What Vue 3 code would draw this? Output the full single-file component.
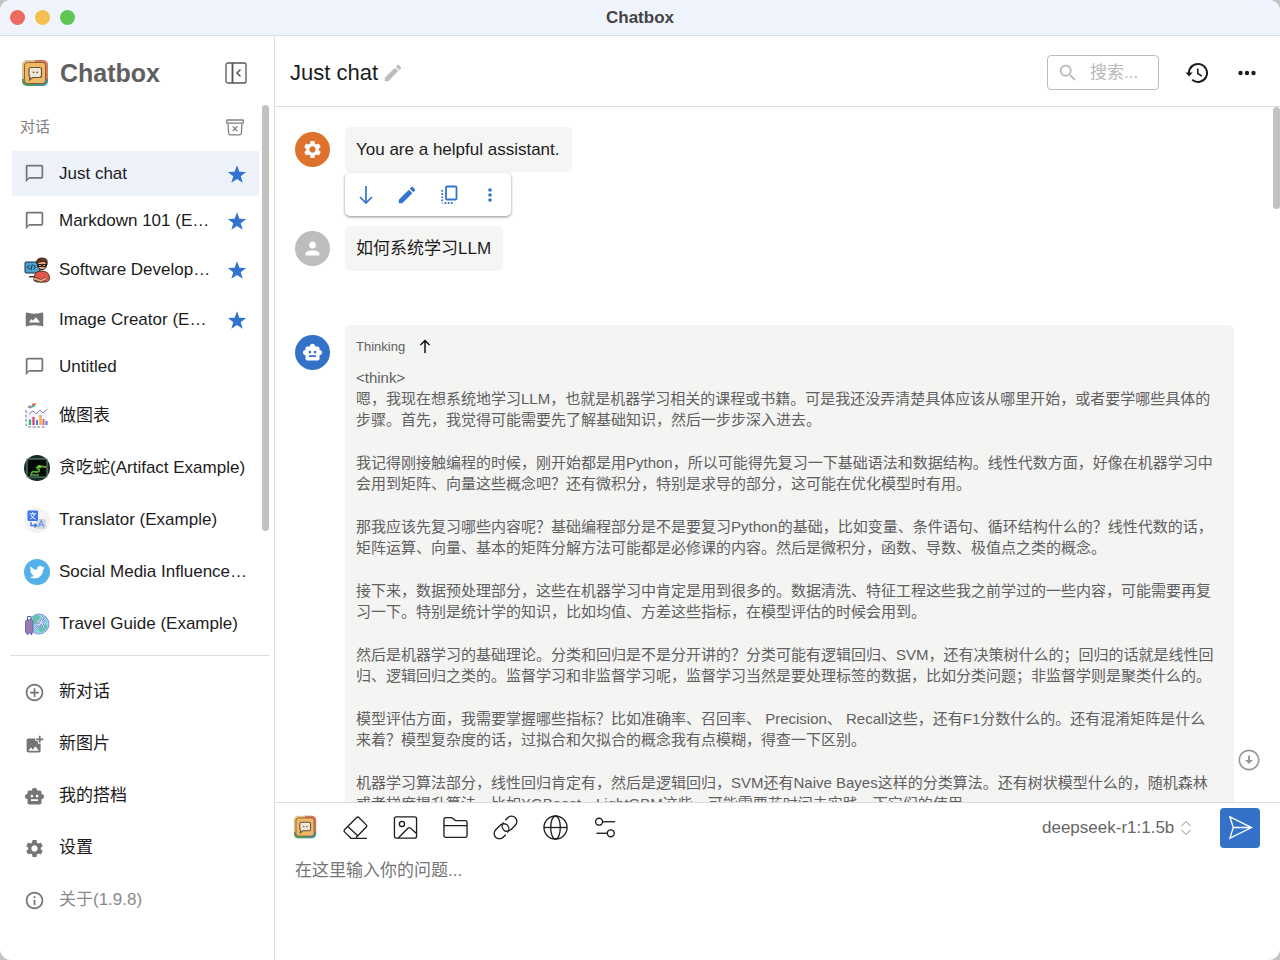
<script setup>
import { ref } from 'vue'

const P = {
  chat: 'M20 2H4c-1.1 0-2 .9-2 2v18l4-4h14c1.1 0 2-.9 2-2V4c0-1.1-.9-2-2-2zm0 14H6l-2 2V4h16v12z',
  star: 'M12 18 18.8 22.4 16.5 14.8 23 9.6 14.9 9.3 12 1.6 9.1 9.3 1 9.6 7.5 14.8 5.2 22.4z',
  pano: 'M20.73 4.09c-.24.08-3.34 1.23-8.73 1.23-5.43 0-8.48-1.14-8.73-1.23C2.64 3.84 2 4.27 2 5v14c0 .73.64 1.16 1.27.91.24-.09 3.34-1.23 8.73-1.23 5.43 0 8.48 1.14 8.73 1.23.63.25 1.27-.18 1.27-.91V5c0-.73-.64-1.16-1.27-.91zM5.5 15.3l3-4 1.8 2.2 3.2-4.2 5 6z',
  add: 'M13 7h-2v4H7v2h4v4h2v-4h4v-2h-4V7zm-1-5C6.48 2 2 6.48 2 12s4.48 10 10 10 10-4.48 10-10S17.52 2 12 2zm0 18c-4.41 0-8-3.59-8-8s3.59-8 8-8 8 3.59 8 8-3.59 8-8 8z',
  photo: 'M19 7v2.99s-1.99.01-2 0V7h-3s.01-1.99 0-2h3V2h2v3h3v2h-3zm-3 4V8h-3V5H5c-1.1 0-2 .9-2 2v12c0 1.1.9 2 2 2h12c1.1 0 2-.9 2-2v-8h-3zM5 19l3-4 2 3 3-4 4 5H5z',
  robot: 'M20 9V7c0-1.1-.9-2-2-2h-3c0-1.66-1.34-3-3-3S9 3.34 9 5H6c-1.1 0-2 .9-2 2v2c-1.66 0-3 1.34-3 3s1.34 3 3 3v4c0 1.1.9 2 2 2h12c1.1 0 2-.9 2-2v-4c1.66 0 3-1.34 3-3s-1.34-3-3-3zM7.5 11.5c0-.83.67-1.5 1.5-1.5s1.5.67 1.5 1.5S9.83 13 9 13s-1.5-.67-1.5-1.5zM16 17H8v-2h8v2zm-1-4c-.83 0-1.5-.67-1.5-1.5S14.17 10 15 10s1.5.67 1.5 1.5S15.83 13 15 13z',
  gear: 'M19.14 12.94c.04-.3.06-.61.06-.94 0-.32-.02-.64-.07-.94l2.03-1.58c.18-.14.23-.41.12-.61l-1.92-3.32c-.12-.22-.37-.29-.59-.22l-2.39.96c-.5-.38-1.03-.7-1.62-.94l-.36-2.54c-.04-.24-.24-.41-.48-.41h-3.84c-.24 0-.43.17-.47.41l-.36 2.54c-.59.24-1.13.57-1.62.94l-2.39-.96c-.22-.08-.47 0-.59.22L2.74 8.87c-.12.21-.08.47.12.61l2.03 1.58c-.05.3-.09.63-.09.94s.02.64.07.94l-2.03 1.58c-.18.14-.23.41-.12.61l1.92 3.32c.12.22.37.29.59.22l2.39-.96c.5.38 1.03.7 1.62.94l.36 2.54c.05.24.24.41.48.41h3.84c.24 0 .44-.17.47-.41l.36-2.54c.59-.24 1.13-.56 1.62-.94l2.39.96c.22.08.47 0 .59-.22l1.92-3.32c.12-.22.07-.47-.12-.61l-2.01-1.58zM12 15.6c-1.98 0-3.6-1.62-3.6-3.6s1.62-3.6 3.6-3.6 3.6 1.62 3.6 3.6-1.62 3.6-3.6 3.6z',
  info: 'M11 7h2v2h-2zm0 4h2v6h-2zm1-9C6.48 2 2 6.48 2 12s4.48 10 10 10 10-4.48 10-10S17.52 2 12 2zm0 18c-4.41 0-8-3.59-8-8s3.59-8 8-8 8 3.59 8 8-3.59 8-8 8z',
  edit: 'M3 17.25V21h3.75L17.81 9.94l-3.75-3.75L3 17.25zM20.71 7.04c.39-.39.39-1.02 0-1.41l-2.34-2.34a.996.996 0 0 0-1.41 0l-1.83 1.83 3.75 3.75 1.83-1.83z',
  person: 'M12 12c2.21 0 4-1.79 4-4s-1.79-4-4-4-4 1.79-4 4 1.79 4 4 4zm0 2c-2.67 0-8 1.34-8 4v2h16v-2c0-2.66-5.33-4-8-4z',
  search: 'M15.5 14h-.79l-.28-.27C15.41 12.59 16 11.11 16 9.5 16 5.91 13.09 3 9.5 3S3 5.91 3 9.5 5.91 16 9.5 16c1.61 0 3.09-.59 4.23-1.57l.27.28v.79l5 4.99L20.49 19l-4.99-5zm-6 0C7.01 14 5 11.99 5 9.5S7.01 5 9.5 5 14 7.01 14 9.5 11.99 14 9.5 14z',
}

const sessions = [
  { name: 'Just chat', icon: 'chat', star: true },
  { name: 'Markdown 101 (Example)', icon: 'chat', star: true },
  { name: 'Software Developer (Example)', avatar: 'developer', star: true },
  { name: 'Image Creator (Example)', icon: 'pano', star: true },
  { name: 'Untitled', icon: 'chat' },
  { name: '做图表', avatar: 'chart' },
  { name: '贪吃蛇(Artifact Example)', avatar: 'snake' },
  { name: 'Translator (Example)', avatar: 'translate' },
  { name: 'Social Media Influencer (Example)', avatar: 'bird' },
  { name: 'Travel Guide (Example)', avatar: 'travel' },
]
const active = ref(0)

const menu = [
  { name: '新对话', icon: 'add' },
  { name: '新图片', icon: 'photo' },
  { name: '我的搭档', icon: 'robot' },
  { name: '设置', icon: 'gear' },
  { name: '关于(1.9.8)', icon: 'info', muted: true },
]

const thoughts = [
  ['嗯，我现在想系统地学习LLM，也就是机器学习相关的课程或书籍。可是我还没弄清楚具体应该从哪里开始，或者要学哪些具体的', '步骤。首先，我觉得可能需要先了解基础知识，然后一步步深入进去。'],
  ['我记得刚接触编程的时候，刚开始都是用Python，所以可能得先复习一下基础语法和数据结构。线性代数方面，好像在机器学习中', '会用到矩阵、向量这些概念吧？还有微积分，特别是求导的部分，这可能在优化模型时有用。'],
  ['那我应该先复习哪些内容呢？基础编程部分是不是要复习Python的基础，比如变量、条件语句、循环结构什么的？线性代数的话，', '矩阵运算、向量、基本的矩阵分解方法可能都是必修课的内容。然后是微积分，函数、导数、极值点之类的概念。'],
  ['接下来，数据预处理部分，这些在机器学习中肯定是用到很多的。数据清洗、特征工程这些我之前学过的一些内容，可能需要再复', '习一下。特别是统计学的知识，比如均值、方差这些指标，在模型评估的时候会用到。'],
  ['然后是机器学习的基础理论。分类和回归是不是分开讲的？分类可能有逻辑回归、SVM，还有决策树什么的；回归的话就是线性回', '归、逻辑回归之类的。监督学习和非监督学习呢，监督学习当然是要处理标签的数据，比如分类问题；非监督学则是聚类什么的。'],
  ['模型评估方面，我需要掌握哪些指标？比如准确率、召回率、 Precision、 Recall这些，还有F1分数什么的。还有混淆矩阵是什么', '来着？模型复杂度的话，过拟合和欠拟合的概念我有点模糊，得查一下区别。'],
  ['机器学习算法部分，线性回归肯定有，然后是逻辑回归，SVM还有Naive Bayes这样的分类算法。还有树状模型什么的，随机森林', '或者梯度提升算法，比如XGBoost、LightGBM这些，可能需要花时间去实践，下它们的使用。'],
]

const draft = ref('')
const query = ref('')
const model = ref('deepseek-r1:1.5b')
</script>

<template>
  <div class="window">
    <svg width="0" height="0" class="defs" aria-hidden="true">
      <defs>
        <symbol id="logo" viewBox="0 0 28 28">
          <rect x="1" y="1" width="26" height="26" rx="5" fill="#dfc08a" />
          <path d="M14 1h8a5 5 0 0 1 5 5v14H14z" fill="#d4775a" />
          <path d="M1 20h13v7H6a5 5 0 0 1-5-5z" fill="#4f9c62" />
          <path d="M14 20h13v2a5 5 0 0 1-5 5h-8z" fill="#438f9b" />
          <rect x="3.500" y="3.500" width="21" height="21" rx="3" fill="#efb966" stroke="#8b6039" stroke-width="1" />
          <path d="M10 8.500h8.500a2 2 0 0 1 2 2v6a2 2 0 0 1-2 2H11.500l-3 2.500.4-3.200A2 2 0 0 1 8 16.500v-6a2 2 0 0 1 2-2z" fill="#f3e6d6" stroke="#66513d" stroke-width="1.200" />
          <circle cx="12.600" cy="13.300" r=".9" fill="#66513d" />
          <circle cx="16.200" cy="13.300" r=".9" fill="#66513d" />
        </symbol>
      </defs>
    </svg>

    <header class="titlebar">
      <div class="lights">
        <button class="light red" aria-label="Close"></button>
        <button class="light yellow" aria-label="Minimize"></button>
        <button class="light green" aria-label="Zoom"></button>
      </div>
      <span class="window-title">Chatbox</span>
    </header>

    <div class="body">
      <aside class="sidebar">
        <div class="brand">
          <svg class="brand-logo"><use href="#logo" /></svg>
          <h1>Chatbox</h1>
          <button class="icon-btn" aria-label="Collapse sidebar">
            <svg width="22" height="22" viewBox="0 0 22 22" fill="none" stroke="#555" stroke-width="1.300">
              <rect x="1" y="1" width="20" height="20" rx="2" />
              <path d="M7.500 1v20" stroke-width="1.800" />
              <path d="M15.500 7.500 12 11l3.500 3.500" stroke-width="1.500" />
            </svg>
          </button>
        </div>

        <div class="section">
          <h2>对话</h2>
          <button class="icon-btn" aria-label="Clear conversations">
            <svg width="18" height="17" viewBox="0 0 18 17" fill="none" stroke="#808080" stroke-width="1.300">
              <rect x=".7" y="1" width="16.600" height="3.200" rx=".8" />
              <path d="M2 4.200l.6 9.800a2 2 0 0 0 2 1.800h8.800a2 2 0 0 0 2-1.800L16 4.200" />
              <path d="M6.700 7.400l4.600 4.600M11.300 7.400 6.700 12" />
            </svg>
          </button>
        </div>

        <nav class="sessions">
          <button
            v-for="(s, i) in sessions"
            :key="s.name"
            class="row"
            :class="{ active: i === active, starred: s.star, pictured: s.avatar }"
            @click="active = i"
          >
            <span class="slot">
              <svg v-if="s.icon" class="glyph" viewBox="0 0 24 24"><path :d="P[s.icon]" fill-rule="evenodd" /></svg>
              <svg v-else-if="s.avatar === 'developer'" class="pic" viewBox="0 0 26 26">
                <rect x="1" y="5" width="15" height="11" rx="1" fill="#4ba3d4" stroke="#20303a" />
                <path d="M5.500 8 3.500 10.200l2 2.200M9.500 8l2 2.200-2 2.200M8.300 7.500l-1.500 5.500" stroke="#182a35" fill="none" />
                <path d="M5 19h10v1.500H5z" fill="#444" />
                <circle cx="18" cy="8" r="4.600" fill="#e8a77b" stroke="#2b1a16" />
                <path d="M12.500 7C12 2 15 .8 18.500 1 23 1 24 4 23 8c-1-2-1-3-2-4-2 1-6 1-7.200 1z" fill="#633526" stroke="#2b1a16" stroke-width=".7" />
                <path d="M14.500 7.500h3v2h-3zm4 0h3v2h-3z" fill="none" stroke="#151515" />
                <path d="M10 23c0-6 2-9 7-9s8.500 2 8.500 7c0 2-1 4-4 4H14c-2 0-4-.8-4-2z" fill="#e2574c" stroke="#2b1a16" stroke-width=".8" />
                <path d="M10 21.500l7 2.500 5-2.500" stroke="#2b1a16" stroke-width="3" fill="none" />
                <path d="M10 21.500l7 2.500 5-2.500" stroke="#e8a77b" stroke-width="2" fill="none" />
              </svg>
              <svg v-else-if="s.avatar === 'chart'" class="pic" viewBox="0 0 26 26">
                <rect x="3" y="8" width="20" height="14" fill="#f1f2ff" />
                <path d="M4 4.500l2.500-2M8 1.500l4-.5" stroke="#e65a4b" stroke-width="1.600" />
                <path d="M5.500 5l4-2" stroke="#36a3dc" stroke-width="1.600" />
                <path d="M8.500 3.500l2.500-1" stroke="#49b66c" stroke-width="1.600" />
                <path d="M2 7v15l2 2h18" stroke="#77748f" stroke-dasharray="3 1.500" fill="none" />
                <path d="M5 11l4-3 3 3 4-4 3 3 4.500-4" stroke="#7e7aa5" stroke-width=".9" fill="none" />
                <path d="M16.500 12v10" stroke="#efb13e" stroke-width="2.400" />
                <path d="M9.500 14v8" stroke="#de4c76" stroke-width="2.400" />
                <path d="M13 17v5M22.500 18v4" stroke="#5876e8" stroke-width="2" />
                <path d="M19.500 16v6" stroke="#e65a67" stroke-width="1.800" />
                <path d="M6 16.500v5.500" stroke="#31b36e" stroke-width="2.200" />
              </svg>
              <svg v-else-if="s.avatar === 'snake'" class="pic" viewBox="0 0 26 26">
                <circle cx="13" cy="13" r="13" fill="#182a24" />
                <rect x="3" y="4" width="20" height="18" fill="#050a08" stroke="#6b9a80" />
                <path d="M7 19.500c1-4 3-3 5-2.500 4 0 4-2 2-3s-1-3 2-2.500h4" stroke="#58a735" stroke-width="1.800" fill="none" />
                <circle cx="15.500" cy="11.800" r="1.700" fill="#73c43c" />
                <circle cx="21" cy="12" r="1" fill="#e6a23a" />
                <path d="M6 20h9" stroke="#58a735" stroke-width="1.500" />
              </svg>
              <svg v-else-if="s.avatar === 'translate'" class="pic" viewBox="0 0 26 26">
                <circle cx="13" cy="13" r="13" fill="#f4f4f5" />
                <rect x="12" y="12" width="10" height="10" rx="1" fill="#d8dadd" />
                <rect x="3.500" y="3.500" width="10.500" height="10.500" rx="1" fill="#3d76e8" />
                <path d="M5.500 6.800h6.500M8.700 5.200v1.600M6.200 12c2-1 3.800-3 4.300-5.200M7 8c1 2 2.500 3.400 4.500 4" stroke="#fff" fill="none" />
                <path d="M14.500 20l2.700-6.500L20 20M15.500 17.800h3.500" stroke="#6f9af0" stroke-width="1.300" fill="none" />
                <path d="M7 15v3.500h5M10.500 16.500l2 2-2 2" stroke="#3d76e8" stroke-width="1.400" fill="none" />
              </svg>
              <svg v-else-if="s.avatar === 'bird'" class="pic" viewBox="0 0 26 26">
                <circle cx="13" cy="13" r="13" fill="#52b1e6" />
                <g transform="translate(5.500 5.500) scale(.64)">
                  <path fill="#fff" d="M23.950 4.570a10 10 0 0 1-2.820.770 4.960 4.960 0 0 0 2.160-2.720c-.950.550-2 .950-3.130 1.180a4.920 4.920 0 0 0-8.380 4.480C7.690 8.090 4.070 6.130 1.640 3.160a4.820 4.820 0 0 0-.670 2.480c0 1.710.870 3.210 2.190 4.100a4.900 4.900 0 0 1-2.230-.620v.060a4.920 4.920 0 0 0 3.950 4.830 5 5 0 0 1-2.210.080 4.940 4.940 0 0 0 4.600 3.420A9.870 9.870 0 0 1 0 19.540a14 14 0 0 0 7.550 2.210c9.050 0 14-7.500 14-13.980 0-.210 0-.420-.020-.630a9.940 9.940 0 0 0 2.460-2.550z" />
                </g>
              </svg>
              <svg v-else class="pic" viewBox="0 0 26 26">
                <circle cx="15" cy="13" r="10" fill="#8dd5e8" stroke="#8794d6" />
                <path d="M9 6c3-3 6-2 7 0s-3 2-3 5-3 2-5 1zM17 14c3-1 5-1 6 1s-3 6-6 6-3-5 0-7z" fill="#67c3a8" />
                <path d="M11 19l10-11M13 10l5 2 2 5M19 6l-3 7-4 1" stroke="#7d83cf" stroke-width="2.200" fill="none" />
                <path d="M11 19l10-11M13 10l5 2 2 5M19 6l-3 7-4 1" stroke="#e3ebff" fill="none" />
                <rect x="1.500" y="9" width="7.500" height="13" rx="1.500" fill="#8c7fc0" stroke="#7568a8" />
                <path d="M3.500 9V5.500h3.500V9" stroke="#625a99" fill="none" />
                <path d="M3.700 11v9M6.800 11v9" stroke="#c4738f" />
                <circle cx="3.500" cy="23" r="1" fill="#625a99" /><circle cx="7.500" cy="23" r="1" fill="#625a99" />
              </svg>
            </span>
            <span class="name">{{ s.name }}</span>
            <svg v-if="s.star" class="star" viewBox="0 0 24 24"><path :d="P.star" /></svg>
          </button>
        </nav>
        <div class="thumb side-thumb"></div>

        <nav class="menu">
          <button v-for="m in menu" :key="m.name" class="row" :class="{ muted: m.muted }">
            <span class="slot"><svg class="glyph" viewBox="0 0 24 24"><path :d="P[m.icon]" /></svg></span>
            <span class="name">{{ m.name }}</span>
          </button>
        </nav>
      </aside>

      <main class="main">
        <header class="topbar">
          <h2>Just chat</h2>
          <button class="icon-btn" aria-label="Rename">
            <svg width="22" height="22" viewBox="0 0 24 24" fill="#bdbdbd"><path :d="P.edit" /></svg>
          </button>
          <label class="search">
            <svg width="22" height="22" viewBox="0 0 24 24" fill="#bdbdbd"><path :d="P.search" /></svg>
            <input v-model="query" type="text" placeholder="搜索..." aria-label="搜索" />
          </label>
          <button class="icon-btn tool" aria-label="History">
            <svg width="24" height="24" viewBox="0 0 24 24" fill="none" stroke="#1c1c1c">
              <path d="M4 12a9 9 0 1 1 3.200 6.800" stroke-width="2" />
              <path d="M.5 11.500h7.200l-3.600 4z" fill="#1c1c1c" stroke="none" />
              <path d="M12.800 7.500v5l4 2.600" stroke-width="1.600" />
            </svg>
          </button>
          <button class="icon-btn tool" aria-label="More">
            <svg width="20" height="20" viewBox="0 0 20 20" fill="#1c1c1c">
              <circle cx="3.500" cy="10" r="2.200" /><circle cx="10" cy="10" r="2.200" /><circle cx="16.500" cy="10" r="2.200" />
            </svg>
          </button>
        </header>

        <section class="chat">
          <article class="message">
            <span class="avatar system"><svg viewBox="0 0 24 24"><path :d="P.gear" /></svg></span>
            <div class="bubble">
              You are a helpful assistant.
              <div class="actions">
                <button aria-label="Scroll down">
                  <svg viewBox="0 0 20 20" fill="none" stroke="#3273d0" stroke-width="1.700"><path d="M10 1v17M4 12l6 6 6-6" /></svg>
                </button>
                <button aria-label="Edit">
                  <svg viewBox="1 1 22 22" fill="#3273d0"><path :d="P.edit" /></svg>
                </button>
                <button aria-label="Copy">
                  <svg viewBox="0 0 20 20" fill="none" stroke="#3273d0" stroke-width="1.800">
                    <rect x="7" y="1.500" width="10.500" height="13" rx="1" />
                    <path d="M3.200 5v13.500" stroke-dasharray="1.700 1.500" /><path d="M5.500 18h9" stroke-dasharray="1.700 1.500" />
                  </svg>
                </button>
                <button aria-label="More">
                  <svg viewBox="0 0 20 20" fill="#3273d0"><circle cx="10" cy="5" r="1.800" /><circle cx="10" cy="10" r="1.800" /><circle cx="10" cy="15" r="1.800" /></svg>
                </button>
              </div>
            </div>
          </article>

          <article class="message user-message">
            <span class="avatar user"><svg viewBox="0 0 24 24"><path :d="P.person" /></svg></span>
            <div class="bubble">如何系统学习LLM</div>
          </article>

          <article class="message reply">
            <span class="avatar bot"><svg viewBox="0 0 24 24"><path :d="P.robot" /></svg></span>
            <div class="bubble thinking">
              <button class="think-head">
                Thinking
                <svg width="12" height="14" viewBox="0 0 12 14" fill="none" stroke="#111" stroke-width="1.500"><path d="M6 14V1.500M1.500 6 6 1.500 10.500 6" /></svg>
              </button>
              <p class="tag">&lt;think&gt;</p>
              <p v-for="(t, i) in thoughts" :key="i">{{ t[0] }}<br />{{ t[1] }}</p>
            </div>
          </article>

          <div class="thumb chat-thumb"></div>
          <button class="to-bottom" aria-label="Scroll to bottom">
            <svg width="22" height="22" viewBox="0 0 22 22" fill="none" stroke="#9a9a9a">
              <circle cx="11" cy="11" r="9.700" stroke-width="1.700" />
              <path d="M11 6.500V12" stroke-width="2" /><path d="M7 11h8l-4 4z" fill="#9a9a9a" stroke="none" />
            </svg>
          </button>
        </section>

        <footer class="composer">
          <div class="tools">
            <button aria-label="Chatbox"><svg class="small-logo"><use href="#logo" /></svg></button>
            <button aria-label="Clear context">
              <svg viewBox="0 0 26 26"><path d="M8 24 1.800 17.800a2 2 0 0 1 0-2.800L14 2.800a2 2 0 0 1 2.800 0l7.200 7.200a2 2 0 0 1 0 2.800L13.500 23.500M5 12l11 10M7.500 24.300h17.500" /></svg>
            </button>
            <button aria-label="Insert image">
              <svg viewBox="0 0 26 26"><rect x="1.500" y="2" width="23" height="22" rx="2" /><circle cx="9.300" cy="9.300" r="2.700" /><path d="M5.500 24 15.500 13.800a2 2 0 0 1 2.800 0l6.200 5.400" /></svg>
            </button>
            <button aria-label="Attach file">
              <svg viewBox="0 0 26 26"><path d="M1 21.500V4.500a1.700 1.700 0 0 1 1.700-1.700h6a2 2 0 0 1 1.300.5l2.200 2c.4.400.8.600 1.400.6h9.700A1.700 1.700 0 0 1 25 7.500v14a1.700 1.700 0 0 1-1.700 1.700H2.700A1.700 1.700 0 0 1 1 21.500zM1 11h24" /></svg>
            </button>
            <button aria-label="Attach link">
              <svg viewBox="0 0 26 26"><path d="M15 10.500a5.500 5.500 0 0 1-.2 7.600M15 10.500a5.500 5.500 0 0 0-7.800.5l-4.400 4.400a5.500 5.500 0 0 0 7.800 7.800l2.600-2.600M11 15.500a5.500 5.500 0 0 1 .2-7.600M11 15.500a5.500 5.500 0 0 0 7.800-.5l4.400-4.400a5.500 5.500 0 0 0-7.800-7.800l-2.600 2.600" /></svg>
            </button>
            <button aria-label="Web browsing">
              <svg viewBox="0 0 26 26"><circle cx="13" cy="13" r="12" /><ellipse cx="13" cy="13" rx="5" ry="12" /><path d="M1 13h24" /></svg>
            </button>
            <button aria-label="Chat settings">
              <svg viewBox="0 0 26 26"><circle cx="6.300" cy="7" r="3.600" /><path d="M9.900 7H23" /><circle cx="18.500" cy="19" r="3.600" /><path d="M3.500 19H14.900" /></svg>
            </button>
            <label class="model">
              <select v-model="model" aria-label="Model">
                <option>deepseek-r1:1.5b</option>
              </select>
              <svg width="12" height="16" viewBox="0 0 12 16" fill="none" stroke="#8a8a8a"><path d="M1.500 6 6 1.500 10.500 6M1.500 10 6 14.500l4.500-4.500" /></svg>
            </label>
            <button class="send" aria-label="Send">
              <svg viewBox="0 0 26 26"><path d="M2 1l22.500 11L2 23l3.500-11zM5.500 12h19" /></svg>
            </button>
          </div>
          <textarea v-model="draft" placeholder="在这里输入你的问题..." aria-label="在这里输入你的问题"></textarea>
        </footer>
      </main>
    </div>
  </div>
</template>

<style>
body {
  background: #c4c2c3;
}
</style>

<style scoped>
* {
  box-sizing: border-box;
  margin: 0;
}
.window {
  display: flex;
  flex-direction: column;
  height: 100vh;
  overflow: hidden;
  border-radius: 11px;
  background: #fff;
  color: #1c1c1c;
  font: 17px/24px "Liberation Sans", "Noto Sans CJK SC", sans-serif;
}
.defs {
  position: absolute;
}
button,
input,
textarea,
select {
  border: 0;
  padding: 0;
  background: none;
  color: inherit;
  font: inherit;
  outline: none;
}
svg {
  display: block;
  flex: none;
}
.titlebar {
  display: grid;
  grid-template-columns: 1fr auto 1fr;
  align-items: center;
  flex: none;
  height: 36px;
  padding: 0 10px;
  background: #f0f5fd;
  border-bottom: 1px solid #dcdfe4;
}
.lights {
  display: flex;
  gap: 10px;
}
.light {
  width: 15px;
  height: 15px;
  border-radius: 50%;
}
.red {
  background: #ed6a5f;
}
.yellow {
  background: #f5bf4f;
}
.green {
  background: #61c554;
}
.window-title {
  font-weight: 700;
  color: #444;
}
.body {
  display: flex;
  flex: 1;
  min-height: 0;
}
.sidebar {
  position: relative;
  display: flex;
  flex-direction: column;
  flex: none;
  width: 275px;
  border-right: 1px solid #dedede;
}
.icon-btn {
  display: flex;
  align-items: center;
  justify-content: center;
}
.brand {
  display: flex;
  align-items: center;
  gap: 11px;
  height: 73px;
  padding: 0 27px 0 21px;
}
.brand-logo {
  width: 28px;
  height: 28px;
}
.brand h1 {
  flex: 1;
  font-size: 25px;
  line-height: 32px;
  color: #606060;
}
.section {
  display: flex;
  align-items: center;
  justify-content: space-between;
  height: 36px;
  padding: 0 30px 0 20px;
}
.section h2 {
  font-size: 15px;
  font-weight: 400;
  color: #808080;
}
.sessions {
  display: flex;
  flex-direction: column;
  flex: 1;
  gap: 2px;
  min-height: 0;
  padding: 6px 15px 0 12px;
  overflow: hidden;
}
.row {
  display: flex;
  align-items: center;
  flex: none;
  height: 45px;
  padding: 0 9px 0 12px;
  text-align: left;
}
.row.pictured {
  height: 50px;
}
.row.starred {
  padding-right: 12px;
}
.row.active {
  background: #edf2fb;
}
.slot {
  flex: none;
  width: 35px;
}
.glyph {
  width: 21px;
  height: 21px;
  fill: #757575;
}
.pic {
  width: 26px;
  height: 26px;
}
.name {
  flex: 1;
  min-width: 0;
  overflow: hidden;
  white-space: nowrap;
  text-overflow: ellipsis;
}
.star {
  width: 20px;
  height: 20px;
  margin-left: 14px;
  fill: #3273d0;
}
.thumb {
  position: absolute;
  width: 7px;
  border-radius: 4px;
  background: #c2c2c2;
}
.side-thumb {
  top: 69px;
  right: 5px;
  height: 426px;
}
.menu {
  display: flex;
  flex-direction: column;
  gap: 2px;
  margin: 0 5px 0 10px;
  padding: 11px 0 35px 2px;
  border-top: 1px solid #dcdcdc;
}
.menu .row {
  height: 50px;
}
.muted .name {
  color: #8a8a8a;
}
.main {
  display: flex;
  flex-direction: column;
  flex: 1;
  min-width: 0;
}
.topbar {
  display: flex;
  align-items: center;
  flex: none;
  height: 71px;
  padding: 3px 18px 0 15px;
  border-bottom: 1px solid #dcdcdc;
}
.topbar h2 {
  margin-right: 4px;
  font-size: 22px;
  font-weight: 400;
}
.search {
  display: flex;
  align-items: center;
  gap: 11px;
  width: 112px;
  height: 35px;
  margin-left: auto;
  padding: 0 9px;
  border: 1px solid #bdbdbd;
  border-radius: 4px;
}
.search input {
  flex: 1;
  width: 0;
}
.search input::placeholder {
  color: #b8b8b8;
}
.tool {
  width: 30px;
  height: 30px;
  margin-left: 20px;
}
.search + .tool {
  margin-left: 23px;
}
.chat {
  position: relative;
  flex: 1;
  min-height: 0;
  padding: 20px 46px 0 20px;
  overflow: hidden;
}
.message {
  display: flex;
  align-items: flex-start;
  gap: 15px;
}
.user-message,
.reply {
  margin-top: 54px;
}
.avatar {
  display: flex;
  align-items: center;
  justify-content: center;
  flex: none;
  width: 35px;
  height: 35px;
  margin-top: 5px;
  border-radius: 50%;
}
.avatar svg {
  width: 21px;
  height: 21px;
  fill: #fff;
}
.system {
  background: #de722c;
}
.user {
  background: #bdbdbd;
}
.bot {
  margin-top: 10px;
  background: #3472ca;
}
.bubble {
  position: relative;
  padding: 11px 12px 10px 11px;
  border-radius: 5px;
  background: #f5f5f4;
}
.actions {
  position: absolute;
  z-index: 1;
  top: 46px;
  left: 0;
  display: flex;
  width: 166px;
  height: 43px;
  border-radius: 5px;
  background: #fff;
  box-shadow: 0 1px 3px rgba(0, 0, 0, 0.45);
}
.actions button {
  display: flex;
  align-items: center;
  justify-content: center;
  flex: 1;
}
.actions svg {
  width: 20px;
  height: 20px;
}
.thinking {
  flex: 1;
  min-width: 0;
  padding: 10px 11px;
  background: #f4f4f3;
  color: #606060;
  font-size: 15px;
  line-height: 21px;
}
.think-head {
  display: flex;
  align-items: center;
  gap: 14px;
  height: 22px;
  margin-bottom: 10px;
  font-size: 13px;
}
.thinking p {
  margin-bottom: 22px;
  white-space: nowrap;
}
.thinking .tag {
  margin-bottom: 0;
}
.chat-thumb {
  top: 0;
  right: 0;
  height: 102px;
}
.to-bottom {
  position: absolute;
  right: 20px;
  bottom: 31px;
}
.composer {
  display: flex;
  flex-direction: column;
  flex: none;
  height: 158px;
  padding: 5px 20px 10px 15px;
  border-top: 1px solid #dcdcdc;
}
.tools {
  display: flex;
  align-items: center;
  gap: 20px;
}
.tools button {
  display: flex;
  align-items: center;
  justify-content: center;
  width: 30px;
  height: 40px;
  padding-bottom: 2px;
}
.tools button svg {
  width: 25px;
  height: 25px;
  fill: none;
  stroke: #1f1f1f;
  stroke-width: 1.4px;
}
.tools button .small-logo {
  width: 24px;
  height: 24px;
  stroke: none;
}
.model {
  display: flex;
  align-items: center;
  gap: 5px;
  margin-left: auto;
  color: #666;
}
.model select {
  appearance: none;
}
.tools .send {
  width: 40px;
  margin-left: 8px;
  padding-bottom: 0;
  border-radius: 4px;
  background: #3472ca;
}
.tools .send svg {
  stroke: #fff;
}
textarea {
  flex: 1;
  padding: 11px 5px;
  resize: none;
}
textarea::placeholder {
  color: #757575;
}
</style>
